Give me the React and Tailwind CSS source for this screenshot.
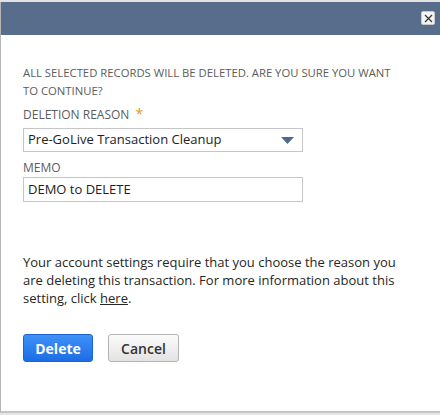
export default function App() {
  return (
    <div className="w-[440px] h-[415px] bg-[#e6e6e6] overflow-hidden relative" style={{ fontFamily: '"Open Sans", sans-serif' }}>
      <div className="h-[2px] bg-[#e2e2e2]" />
      <div className="h-[411px] bg-white border-l border-[#b5b5b5] border-b-2 border-b-[#c4c4c4] flex flex-col">
        <div className="h-[33px] bg-[#586c8c] flex items-start justify-end pr-[5px] pt-[9px]">
          <button className="w-[14px] h-[14px] rounded-[2px] bg-[#f4f4f4] border border-[#c8c8c8] flex items-center justify-center">
            <svg width="9" height="9" viewBox="0 0 9 9">
              <path d="M1 1 L8 8 M8 1 L1 8" stroke="#333" strokeWidth="1.2" />
            </svg>
          </button>
        </div>
        <div className="pl-[22px] pr-4 pt-[29px]">
          <p className="text-[11.3px] leading-[18px] text-[#5c5c5c] w-[385px]">
            ALL SELECTED RECORDS WILL BE DELETED. ARE YOU SURE YOU WANT TO CONTINUE?
          </p>
          <div className="mt-[6px] text-[12px] leading-[18px] text-[#5c5c5c] flex items-center">
            DELETION REASON
            <span className="text-[#e09a25] ml-[6px] text-[14px] leading-[14px] relative top-[-1px]">*</span>
          </div>
          <div className="mt-[4px] w-[280px] h-[24px] border border-[#c6c6c6] bg-white flex items-center justify-between pl-[4px] pr-[8px]">
            <span className="text-[13px] text-[#222]">Pre-GoLive Transaction Cleanup</span>
            <svg width="13" height="7" viewBox="0 0 13 7">
              <path d="M0 0 H13 L6.5 7 Z" fill="#4f6a92" />
            </svg>
          </div>
          <div className="mt-[7px] text-[12px] leading-[18px] text-[#5c5c5c]">MEMO</div>
          <div className="mt-[0px] w-[280px] h-[25px] border border-[#c6c6c6] bg-white flex items-center pl-[4px]">
            <span className="text-[13px] text-[#222]">DEMO to DELETE</span>
          </div>
          <p className="mt-[51px] text-[13px] leading-[18px] text-[#262626] w-[390px]">
            Your account settings require that you choose the reason you are deleting this transaction. For more information about this setting, click <a className="underline text-[#262626]">here</a>.
          </p>
          <div className="mt-[27px] flex gap-[15px]">
            <button className="w-[70px] h-[28px] rounded-[3px] border border-[#1f63cf] bg-gradient-to-b from-[#3f91f7] to-[#1c6de6] text-white text-[14px] font-bold">
              Delete
            </button>
            <button className="w-[71px] h-[28px] rounded-[3px] border border-[#b3b3b3] bg-gradient-to-b from-[#fbfbfb] to-[#e3e3e3] text-[#333] text-[14px] font-semibold">
              Cancel
            </button>
          </div>
        </div>
      </div>
    </div>
  );
}
